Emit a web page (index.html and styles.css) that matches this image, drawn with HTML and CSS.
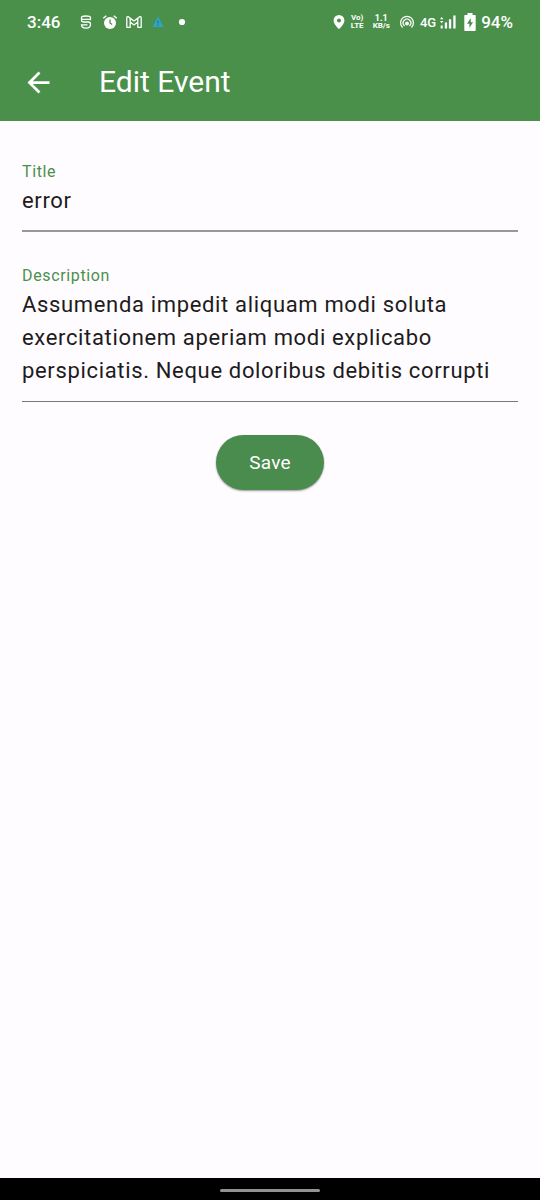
FILE: index.html
```html
<!DOCTYPE html>
<html lang="en">
<head>
<meta charset="utf-8">
<meta name="viewport" content="width=device-width, initial-scale=1">
<title>Edit Event</title>
<link rel="stylesheet" href="styles.css">
</head>
<body class="screen">
<div class="status">
  <div class="status-left">
    <span class="clock">3:46</span>
    <svg class="glyph" viewBox="0 0 16 16" fill="none" stroke="#fff" stroke-width="1.300"><path d="M12.500 6.200V3.500Q12.500 2 8 2T3.500 3.500V6Q3.500 8 6 8h4.500q2 0 2 2.300Q12.500 14.200 8 14.200T3.500 10.800H9.500M3.500 5.400h9"/></svg>
    <svg class="glyph" viewBox="0 0 16 16"><circle cx="8" cy="9" r="6" fill="#fff"/><path d="M1.300 4.300 4.300 1.700M14.700 4.300 11.700 1.700" stroke="#fff" stroke-width="1.500"/><path d="M8 5.500V9l2.200 1.500" fill="none" stroke="#4a904b" stroke-width="1.300"/></svg>
    <svg class="glyph" viewBox="0 0 16 16" fill="none" stroke="#fff" stroke-width="1.300" stroke-linejoin="round"><path d="M.8 13.300V3.700Q.8 2.300 2.300 2.700L8 7l5.700-4.300q1.500-.4 1.500 1v9.600h-3.400V8L8 10.900 4.200 8v5.300ZM4.200 8V4.200M11.800 8V4.200"/></svg>
    <svg class="glyph" viewBox="0 0 16 16"><path d="M8 2.500 13.500 13H2.500Z" fill="#2ba6c8"/><path d="M8 6.500V9.500M8 10.500v1.200" stroke="#286f91" stroke-width="1.300"/></svg>
    <svg class="glyph" viewBox="0 0 16 16"><circle cx="8" cy="8" r="3.100" fill="#fff"/></svg>
  </div>
  <div class="status-right">
    <svg class="pin" viewBox="0 0 12 16"><path fill="#fff" fill-rule="evenodd" d="M6 1a5.400 5.400 0 0 0-5.400 5.400C.6 10.300 6 15 6 15s5.400-4.700 5.400-8.600A5.400 5.400 0 0 0 6 1Zm0 3.500a2 2 0 1 1 0 4 2 2 0 0 1 0-4Z"/></svg>
    <span class="stack volte"><span>Vo)</span><span>LTE</span></span>
    <span class="stack speed"><span class="rate">1.1</span><span>KB/s</span></span>
    <svg class="glyph hotspot" viewBox="0 0 16 16" fill="none" stroke="#fff" stroke-width="1.300" stroke-linecap="round"><path d="M3.200 13a6.400 6.400 0 1 1 9.600 0M5.200 11.500a3.800 3.800 0 1 1 5.600 0"/><circle cx="8" cy="9.500" r="1.300" fill="#fff"/></svg>
    <span class="network">4G</span>
    <svg class="glyph" viewBox="0 0 16 16" fill="#fff"><path d="M0 5.200 1.700 3l1.700 2.200ZM0 7l1.700 2.200L3.400 7ZM.7 11.500h2v3h-2ZM4.800 8.500h2.300v6H4.800ZM8.900 5.200h2.300v9.300H8.900ZM13.300 1.500h2.300v13h-2.300Z"/></svg>
    <svg class="battery" viewBox="0 0 12 18"><path d="M3.500 0h5v2H11q.7 0 .7.700v14.600q0 .7-.7.700H1q-.7 0-.7-.7V2.700Q.3 2 1 2h2.500Z" fill="#fff"/><path d="M6.800 5 3 10.700h2.400V15L9 9.300H6.800Z" fill="#4a904b"/></svg>
    <span class="percent">94%</span>
  </div>
</div>
<header class="appbar">
  <button class="back" type="button" aria-label="Back"><svg class="arrow" viewBox="0 0 24 24"><path fill="#fff" d="M20 11H7.830l5.590-5.590L12 4l-8 8 8 8 1.410-1.410L7.830 13H20v-2z"/></svg></button>
  <h1 class="heading">Edit Event</h1>
</header>
<main class="content">
  <form class="form">
    <div class="field">
      <label class="label" for="title">Title</label>
      <input class="control control-title" id="title" type="text" value="error">
    </div>
    <div class="field">
      <label class="label" for="description">Description</label>
      <textarea class="control control-description" id="description" rows="3">Assumenda impedit aliquam modi soluta exercitationem aperiam modi explicabo perspiciatis. Neque doloribus debitis corrupti</textarea>
    </div>
    <button class="save" type="button">Save</button>
  </form>
</main>
<footer class="navbar"><div class="handle"></div></footer>
</body>
</html>
```
FILE: styles.css
```css
* { box-sizing: border-box; }

.screen {
  margin: 0;
  min-height: 100vh;
  display: flex;
  flex-direction: column;
  background: #fffcff;
  color: #1d1b20;
  font-family: Roboto, sans-serif;
}

.status {
  display: flex;
  justify-content: space-between;
  height: 44px;
  padding: 0 27px;
  background: #4a904b;
  color: #fff;
}

.status-left,
.status-right {
  display: flex;
  align-items: center;
}

.status-left { gap: 8px; }
.clock { margin-right: 10px; font-size: 17px; font-weight: 500; }
.glyph { width: 16px; height: 16px; }
.pin { width: 12px; height: 16px; margin-right: 6px; }

.stack {
  display: flex;
  flex-direction: column;
  align-items: center;
  font-size: 8px;
  font-weight: 700;
  line-height: 8px;
}

.volte { margin-right: 9px; }
.speed { margin-right: 9px; }
.rate { font-size: 9px; }
.hotspot { margin-right: 5px; }
.network { margin-right: 4px; font-size: 13px; font-weight: 500; }
.battery { width: 12px; height: 18px; margin: 0 5px 0 8px; }
.percent { font-size: 17px; font-weight: 500; }

.appbar {
  display: flex;
  align-items: center;
  gap: 44px;
  height: 77px;
  padding: 0 22px;
  background: #4a904b;
  color: #fff;
}

.back { display: flex; padding: 0; border: 0; background: none; }
.arrow { width: 33px; height: 33px; }
.heading { margin: 0; padding-bottom: 2px; font-size: 30px; font-weight: 400; line-height: 36px; }

.content { flex: 1; padding: 40px 22px; }
.form { display: flex; flex-direction: column; gap: 33px; }
.field { display: flex; flex-direction: column; gap: 1px; }

.label {
  color: #4a904b;
  font-size: 16px;
  line-height: 22px;
  letter-spacing: 0.04em;
}

.control {
  display: block;
  width: 100%;
  margin: 0;
  padding: 0 0 13px;
  border: 0;
  border-bottom: 1px solid #7b757f;
  border-radius: 0;
  outline: 0;
  background: none;
  color: inherit;
  font-family: inherit;
  font-size: 22px;
  line-height: 33px;
  letter-spacing: 0.03em;
  resize: none;
  overflow: hidden;
}

.control-title { height: 48px; border-bottom: 2px solid #9b959c; }
.control-description { height: 114px; }

.save {
  align-self: center;
  height: 55px;
  padding: 0 33px;
  border: 0;
  border-radius: 28px;
  background: #4a8c4e;
  box-shadow: 0 1px 2px rgba(0, 0, 0, 0.4);
  color: #fff;
  font-family: inherit;
  font-size: 19px;
  letter-spacing: 0.01em;
}

.navbar {
  display: flex;
  align-items: center;
  justify-content: center;
  height: 22px;
  padding-top: 2px;
  background: #000;
}

.handle { width: 100px; height: 3px; border-radius: 2px; background: #929292; }
```
